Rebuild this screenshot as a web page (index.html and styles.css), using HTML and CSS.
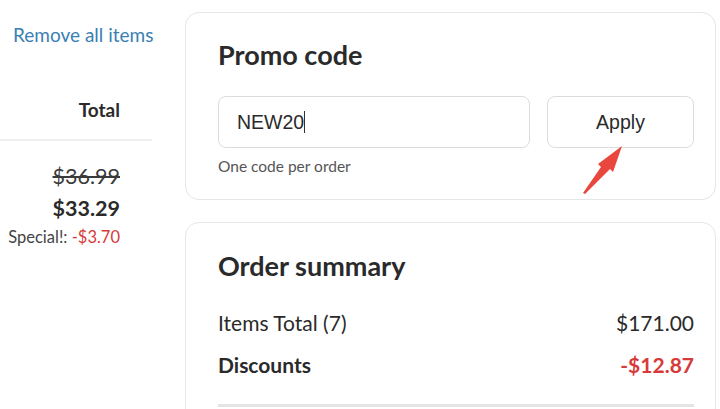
FILE: index.html
```html
<!DOCTYPE html>
<html>
<head>
    <meta charset="UTF-8">
    <title>Cart</title>
    <link rel="stylesheet" href="styles.css">
</head>
<body>
    <div class="page">
        <div class="cart_col">
            <a class="remove_all" href="#">Remove all items</a>
            <div class="total_head">Total</div>
            <div class="price_block">
                <div class="old_price">$36.99</div>
                <div class="new_price">$33.29</div>
                <div class="special">Special!: <span class="minus">-$3.70</span></div>
            </div>
        </div>
        <div class="side_col">
            <div class="card promo">
                <h2>Promo code</h2>
                <div class="promo_row">
                    <div class="promo_input">NEW20<span class="caret"></span></div>
                    <button class="apply">Apply</button>
                </div>
                <div class="hint">One code per order</div>
                <svg class="arrow" width="60" height="60" viewBox="0 0 60 60">
                    <polygon points="1,50 19,24 16,21 40,3 31,29 28,26 3,51" fill="#e9473d"/>
                </svg>
            </div>
            <div class="card summary">
                <h2>Order summary</h2>
                <div class="sum_row"><span>Items Total (7)</span><span>$171.00</span></div>
                <div class="sum_row bold"><span>Discounts</span><span class="minus">-$12.87</span></div>
                <div class="sum_line"></div>
            </div>
        </div>
    </div>
</body>
</html>
```

FILE: styles.css
```css
html,
body {
    margin: 0;
    height: 100%;
    overflow: hidden;
    background: #fff;
    font-family: "Lato", "Open Sans", sans-serif;
    color: #2a2a2a;
}
.page {
    display: flex;
    align-items: flex-start;
}
.cart_col {
    width: 152px;
    flex-shrink: 0;
}
.remove_all {
    display: block;
    padding: 24px 0 0 13px;
    font-size: 19px;
    line-height: 22px;
    color: #3b80b3;
    text-decoration: none;
    white-space: nowrap;
}
.total_head {
    margin-top: 53px;
    padding-right: 32px;
    text-align: right;
    font-weight: bold;
    font-size: 19px;
    line-height: 22px;
    padding-bottom: 18px;
    border-bottom: 2px solid #f0f0f0;
}
.price_block {
    padding-top: 22px;
    padding-right: 32px;
    text-align: right;
}
.old_price {
    font-size: 21.5px;
    line-height: 26px;
    color: #3a3a3a;
    text-decoration: line-through;
}
.new_price {
    margin-top: 6px;
    font-size: 21.5px;
    line-height: 26px;
    font-weight: bold;
}
.special {
    margin-left: -30px;
    margin-top: 5px;
    font-size: 16.5px;
    line-height: 22px;
    color: #444;
    white-space: nowrap;
}
.minus {
    color: #d83a3a;
}
.side_col {
    margin-left: 33px;
    width: 531px;
    display: flex;
    flex-direction: column;
    gap: 22px;
    padding-top: 12px;
}
.card {
    position: relative;
    border: 1px solid #e6e6e6;
    border-radius: 14px;
    padding: 0 21px 0 32px;
}
.card h2 {
    margin: 0;
    font-size: 27px;
    line-height: 32px;
    font-weight: bold;
}
.promo {
    height: 188px;
    padding-top: 26px;
    box-sizing: border-box;
}
.promo_row {
    display: flex;
    gap: 17px;
    margin-top: 25px;
}
.promo_input,
.apply {
    height: 52px;
    box-sizing: border-box;
    border: 1px solid #dcdcdc;
    border-radius: 8px;
    background: #fff;
    font-family: "Liberation Sans", Arial, sans-serif;
    font-size: 19.5px;
    color: #2a2a2a;
}
.promo_input {
    width: 312px;
    padding-left: 18px;
    display: flex;
    align-items: center;
}
.caret {
    display: inline-block;
    width: 1px;
    height: 22px;
    background: #333;
}
.apply {
    width: 147px;
    cursor: pointer;
}
.hint {
    margin-top: 8px;
    font-size: 15.5px;
    line-height: 20px;
    color: #555;
}
.arrow {
    position: absolute;
    left: 396px;
    top: 130px;
}
.summary {
    padding-top: 27px;
    height: 200px;
    box-sizing: border-box;
}
.sum_row {
    display: flex;
    justify-content: space-between;
    font-size: 21px;
    line-height: 26px;
    margin-top: 28px;
}
.sum_row + .sum_row {
    margin-top: 16px;
}
.sum_row.bold {
    font-weight: bold;
}
.sum_line {
    margin-top: 26px;
    height: 3px;
    background: #e4e4e4;
}
```
